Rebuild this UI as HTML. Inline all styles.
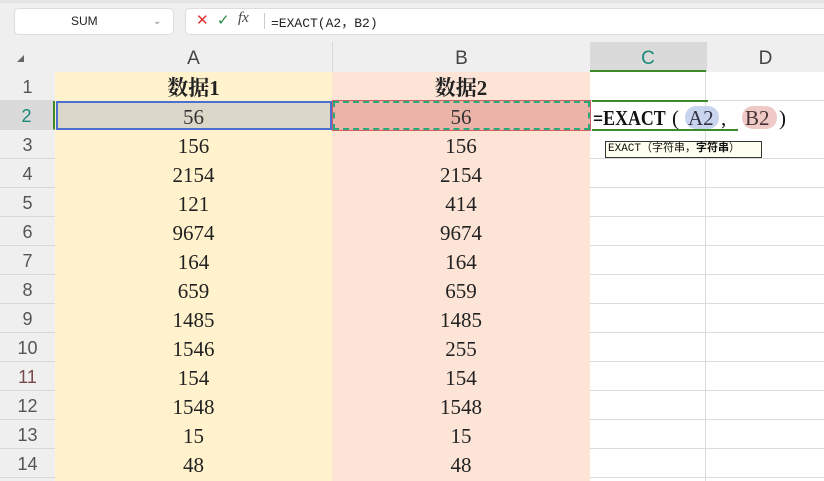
<!DOCTYPE html><html><head><meta charset="utf-8"><style>
*{margin:0;padding:0;box-sizing:border-box}
body{width:824px;height:481px;overflow:hidden;background:#efefef;font-family:"Liberation Sans",sans-serif;position:relative}
.a{position:absolute}
.rh{position:absolute;left:0;width:55px;height:29px;border-bottom:1px solid #d8d8d8;color:#555;font-size:18px;text-align:center;line-height:30px;background:#efefef}
.c{position:absolute;height:29px;text-align:center;line-height:32px;font-family:"Liberation Serif","Noto Serif CJK SC",serif;font-size:21px;color:#222}
.gl{position:absolute;height:1px;background:#dcdcdc;left:590px;width:234px}
.f{position:absolute;top:103px;line-height:30px;font-family:'Liberation Serif','Noto Serif CJK SC',serif;font-size:21px;color:#111;white-space:nowrap}
</style></head><body>
<div class="a" style="left:0;top:0;width:824px;height:3px;background:#e2e4e6"></div>
<div class="a" style="left:14px;top:8px;width:160px;height:27px;background:#fff;border:1px solid #ddd;border-radius:5px;font-size:12px;line-height:25px;padding-left:56px;color:#222">SUM<span class="a" style="left:138px;top:0;color:#888;font-size:10px">&#8964;</span></div>
<div class="a" style="left:185px;top:8px;width:645px;height:27px;background:#fff;border:1px solid #ddd;border-radius:5px"></div>
<div class="a" style="left:196px;top:11px;color:#d33;font-size:15px">✕</div>
<div class="a" style="left:217px;top:11px;color:#2a8a4a;font-size:15px">✓</div>
<div class="a" style="left:238px;top:10px;color:#444;font-size:15px;font-style:italic;font-family:'Liberation Serif',serif">fx</div>
<div class="a" style="left:264px;top:13px;width:1px;height:16px;background:#ccc"></div>
<div class="a" style="left:271px;top:12px;font-size:13px;font-family:'Liberation Mono','Noto Sans CJK SC',monospace;color:#222">=EXACT(A2，B2)</div>
<div class="a" style="left:17px;top:55px;width:0;height:0;border-left:7px solid transparent;border-bottom:7px solid #666"></div>
<div class="a" style="left:55px;top:42px;width:277px;height:30px;text-align:center;line-height:33px;font-size:19px;color:#444">A</div>
<div class="a" style="left:332px;top:42px;width:1px;height:30px;background:#d8d8d8"></div>
<div class="a" style="left:333px;top:42px;width:257px;height:30px;text-align:center;line-height:33px;font-size:19px;color:#444">B</div>
<div class="a" style="left:590px;top:42px;width:116px;height:30px;background:#dadada;border-bottom:2px solid #3d8a2a;text-align:center;line-height:33px;font-size:19px;color:#1a8a7a">C</div>
<div class="a" style="left:706px;top:42px;width:118px;height:30px;text-align:center;line-height:33px;font-size:19px;color:#444;border-left:1px solid #d8d8d8">D</div>
<div class="a" style="left:55px;top:72px;width:277px;height:409px;background:#fff2cc"></div>
<div class="a" style="left:332px;top:72px;width:258px;height:409px;background:#fce4d6"></div>
<div class="a" style="left:590px;top:72px;width:234px;height:409px;background:#fff"></div>
<div class="a" style="left:705px;top:72px;width:1px;height:409px;background:#dcdcdc"></div>
<div class="gl" style="top:100px"></div><div class="gl" style="top:158px"></div><div class="gl" style="top:187px"></div><div class="gl" style="top:216px"></div><div class="gl" style="top:245px"></div><div class="gl" style="top:274px"></div><div class="gl" style="top:303px"></div><div class="gl" style="top:332px"></div><div class="gl" style="top:361px"></div><div class="gl" style="top:390px"></div><div class="gl" style="top:419px"></div><div class="gl" style="top:448px"></div><div class="gl" style="top:477px"></div>
<div class="rh" style="top:72px">1</div>
<div class="rh" style="top:101px;background:#dadada;color:#1a8a7a;border-right:2px solid #3d8a2a">2</div>
<div class="rh" style="top:130px">3</div><div class="rh" style="top:159px">4</div><div class="rh" style="top:188px">5</div><div class="rh" style="top:217px">6</div><div class="rh" style="top:246px">7</div><div class="rh" style="top:275px">8</div><div class="rh" style="top:304px">9</div><div class="rh" style="top:333px">10</div><div class="rh" style="top:362px;color:#7a4a4a">11</div><div class="rh" style="top:391px">12</div><div class="rh" style="top:420px">13</div><div class="rh" style="top:449px">14</div>
<div class="a" style="left:56px;top:101px;width:276px;height:29px;background:#dcd8c9;border:2px solid #4a6fd0"></div>
<div class="a" style="left:333px;top:101px;width:257px;height:29px;background:#ebb4a8;border:2px dashed #2aa87a;outline:1px solid #d06060"></div>
<div class="a" style="left:592px;top:100px;width:116px;height:2px;background:#3d8a2a"></div>
<div class="a" style="left:592px;top:129px;width:146px;height:2px;background:#3d8a2a"></div>
<div class="c" style="left:55px;top:72px;width:277px;font-weight:bold">数据1</div>
<div class="c" style="left:332px;top:72px;width:258px;font-weight:bold">数据2</div>
<div class="c" style="left:55px;top:101px;width:277px;color:#333">56</div><div class="c" style="left:332px;top:101px;width:258px;color:#333">56</div>
<div class="c" style="left:55px;top:130px;width:277px">156</div><div class="c" style="left:332px;top:130px;width:258px">156</div>
<div class="c" style="left:55px;top:159px;width:277px">2154</div><div class="c" style="left:332px;top:159px;width:258px">2154</div>
<div class="c" style="left:55px;top:188px;width:277px">121</div><div class="c" style="left:332px;top:188px;width:258px">414</div>
<div class="c" style="left:55px;top:217px;width:277px">9674</div><div class="c" style="left:332px;top:217px;width:258px">9674</div>
<div class="c" style="left:55px;top:246px;width:277px">164</div><div class="c" style="left:332px;top:246px;width:258px">164</div>
<div class="c" style="left:55px;top:275px;width:277px">659</div><div class="c" style="left:332px;top:275px;width:258px">659</div>
<div class="c" style="left:55px;top:304px;width:277px">1485</div><div class="c" style="left:332px;top:304px;width:258px">1485</div>
<div class="c" style="left:55px;top:333px;width:277px">1546</div><div class="c" style="left:332px;top:333px;width:258px">255</div>
<div class="c" style="left:55px;top:362px;width:277px">154</div><div class="c" style="left:332px;top:362px;width:258px">154</div>
<div class="c" style="left:55px;top:391px;width:277px">1548</div><div class="c" style="left:332px;top:391px;width:258px">1548</div>
<div class="c" style="left:55px;top:420px;width:277px">15</div><div class="c" style="left:332px;top:420px;width:258px">15</div>
<div class="c" style="left:55px;top:449px;width:277px">48</div><div class="c" style="left:332px;top:449px;width:258px">48</div>
<div class="a" style="left:685px;top:106px;width:34px;height:23px;border-radius:11px;background:#c9d5ef"></div>
<div class="a" style="left:742px;top:106px;width:35px;height:23px;border-radius:11px;background:#efc9c6"></div>
<div class="f" style="left:593px;font-weight:bold;transform:scaleX(0.85);transform-origin:0 0">=EXACT</div>
<div class="f" style="left:672px">(</div>
<div class="f" style="left:688px;color:#334">A2</div>
<div class="f" style="left:721px">,</div>
<div class="f" style="left:745px;color:#433">B2</div>
<div class="f" style="left:779px">)</div>
<div class="a" style="left:605px;top:141px;width:157px;height:17px;background:#fffff0;border:1px solid #333;font-size:11px;line-height:15px;padding-left:2px;font-family:'Liberation Mono','Noto Sans CJK SC',monospace;color:#111;white-space:nowrap">EXACT（字符串，<b>字符串</b>）</div>
</body></html>
